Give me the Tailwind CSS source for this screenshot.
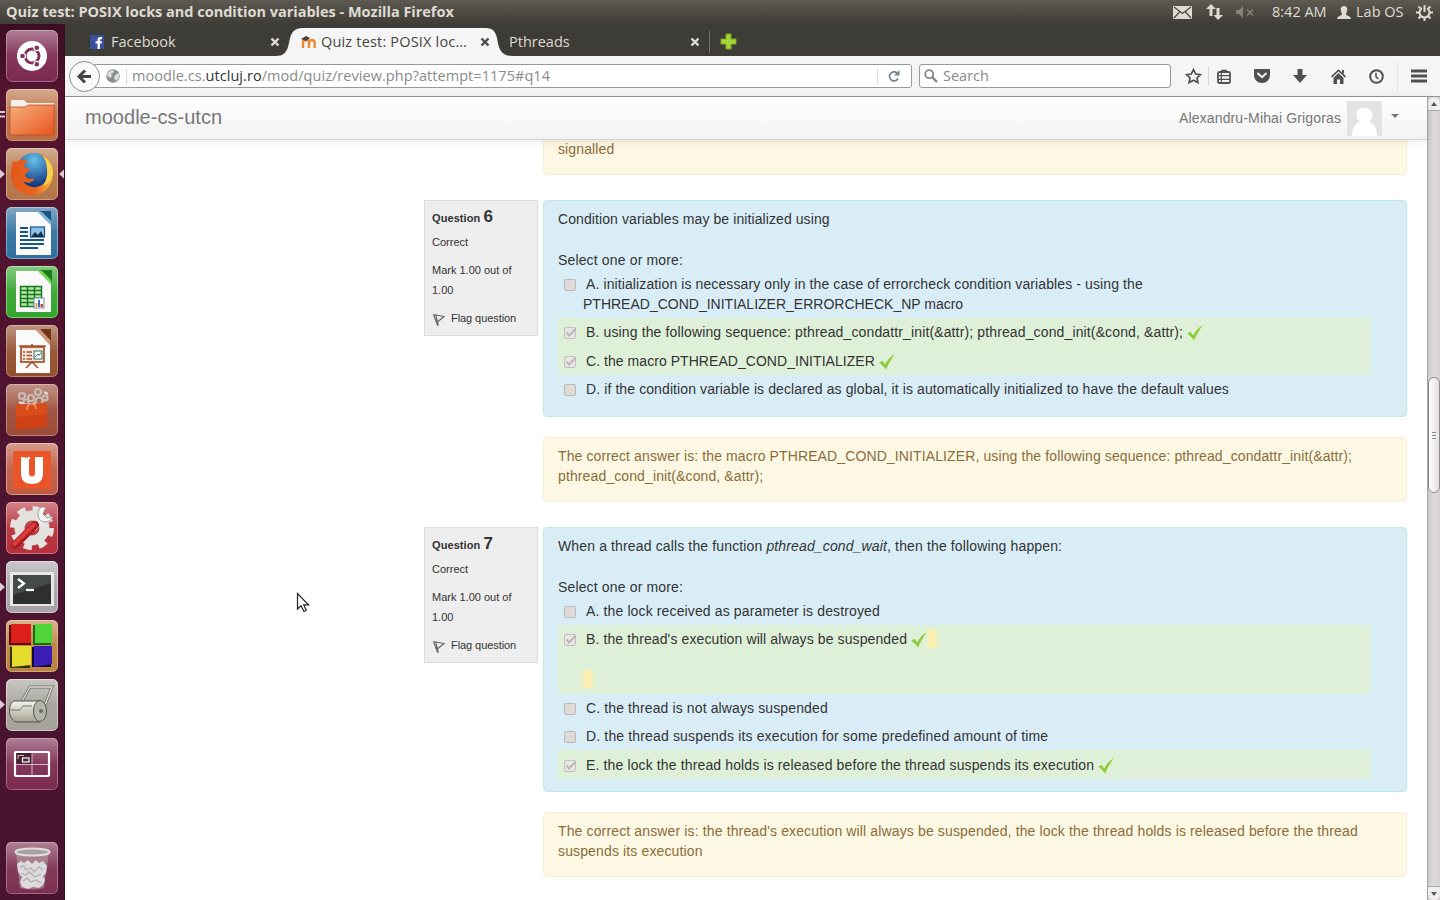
<!DOCTYPE html>
<html lang="en">
<head>
<meta charset="utf-8">
<title>Quiz test: POSIX locks and condition variables</title>
<script src="https://cdn.jsdelivr.net/npm/@tailwindcss/browser@4"></script>
</head>
<body class="w-[1440px] h-[900px] overflow-hidden bg-white font-['Open_Sans',sans-serif] flex flex-col">
<svg class="absolute w-0 h-0">
  <defs>
    <linearGradient id="gloss" x1="0" y1="0" x2="0" y2="1"><stop offset="0" stop-color="#fff" stop-opacity=".4"/><stop offset=".5" stop-color="#fff" stop-opacity=".06"/><stop offset="1" stop-color="#fff" stop-opacity="0"/></linearGradient>
    <linearGradient id="folder" x1="0" y1="0" x2="1" y2="1"><stop offset="0" stop-color="#f3b07c"/><stop offset="1" stop-color="#ea5420"/></linearGradient>
    <linearGradient id="fox" x1="0" y1="0" x2="1" y2="0"><stop offset="0" stop-color="#e2571c"/><stop offset=".6" stop-color="#e8681f"/><stop offset="1" stop-color="#f6c63c"/></linearGradient>
    <radialGradient id="globe" cx=".5" cy=".2" r=".7"><stop offset="0" stop-color="#67c0ea"/><stop offset="1" stop-color="#123a80"/></radialGradient>
    <linearGradient id="metal" x1="0" y1="0" x2="0" y2="1"><stop offset="0" stop-color="#f4f3ee"/><stop offset="1" stop-color="#a4a28e"/></linearGradient>
    <symbol id="tick" viewBox="0 0 16 16"><path d="M.3 8.800 3.600 6.800 6.200 10.400C8.500 6.200 11 2.900 15.700.3 12.500 5 9.400 9.500 7 15.600 5 12.800 3 10.700.3 8.800Z" fill="#8ccb3a"/></symbol>
    <symbol id="flag" viewBox="0 0 14 14"><path d="M1.500 1.500 12 3.500 6 8.500M1.500 1.500 5.800 12.800M3.800 2.200 6.300 12.500" fill="none" stroke="#666" stroke-width="1.200"/></symbol>
    <symbol id="box" viewBox="0 0 14 14"><rect x="1.500" y="1.500" width="11" height="11" rx="1.500" fill="#dedad8" stroke="#bcb8b7"/></symbol>
    <symbol id="boxon" viewBox="0 0 14 14"><rect x="1.500" y="1.500" width="11" height="11" rx="1.500" fill="#e9e6e6" stroke="#c3bfbe"/><path d="M3.500 6.500 6 9.500 13 2.500" fill="none" stroke="#bab5b6" stroke-width="1.900"/></symbol>
    <symbol id="x" viewBox="0 0 10 10"><path d="M1.500 1.500 8.500 8.500M8.500 1.500 1.500 8.500" stroke="currentColor" stroke-width="2.400"/></symbol>
  </defs>
</svg>

<!-- Top panel -->
<header class="h-6 shrink-0 flex items-center bg-linear-to-b from-[#5c5a51] to-[#403d38] text-[#dfdbd2] pl-[6px] pr-[7px]">
  <span class="text-[14.5px] font-bold whitespace-nowrap tracking-[-0.01px]">Quiz test: POSIX locks and condition variables - Mozilla Firefox</span>
  <div class="ml-auto flex items-center h-full text-[14.5px]">
    <svg class="w-[19px] h-[13px] mr-[14px]" viewBox="0 0 19 13"><rect width="19" height="13" rx="1" fill="#dfdbd2"/><path d="M1 1 9.500 7.500 18 1M1 12 6.500 6M18 12 12.500 6" fill="none" stroke="#4a483f" stroke-width="1.200"/></svg>
    <svg class="w-[17px] h-[16px] mr-[13px]" viewBox="0 0 17 16"><path d="M5 0 10 5H6.500V12H3.500V5H0ZM12 16 7.500 11H10.500V4H13.500V11H17Z" fill="#dfdbd2"/></svg>
    <svg class="w-[18px] h-[12px] mr-[18px]" viewBox="0 0 18 12"><path d="M0 4H3L7 0V12L3 8H0Z" fill="#85827a"/><path d="M11 3.500 17 9.500M17 3.500 11 9.500" stroke="#85827a" stroke-width="1.600"/></svg>
    <span class="whitespace-nowrap w-[54px] mr-[11px]">8:42 AM</span>
    <svg class="w-[14px] h-[13px] mr-[5px]" viewBox="0 0 14 13"><path d="M7 0C9.500 0 10.500 1.800 10.300 4 10.200 6 9 7 9 8.500 10 9.800 13.500 9.800 14 13H0C.5 9.800 4 9.800 5 8.500 5 7 3.800 6 3.700 4 3.500 1.800 4.500 0 7 0Z" fill="#dfdbd2"/></svg>
    <span class="whitespace-nowrap w-[47px] mr-[13px]">Lab OS</span>
    <svg class="w-[17px] h-[17px]" viewBox="0 0 17 17" fill="none" stroke="#dfdbd2"><path d="M6 4.200A5 5 0 1 0 11 4.200" stroke-width="2"/><path d="M8.500 1V8" stroke-width="2"/><path d="M2.500 2.500 4.300 4.300M14.500 2.500 12.700 4.300M0 8.500H3M14 8.500H17M2.500 14.500 4.500 12.500M14.500 14.500 12.500 12.500M8.500 14V17" stroke-width="2"/></svg>
  </div>
</header>

<div class="flex flex-1 min-h-0">
  <!-- Launcher -->
  <nav class="relative w-[65px] shrink-0 bg-linear-to-b from-[#3a0d22] via-[#54142f] via-8% to-[#481431] border-r border-[#3a0f26] flex flex-col gap-[7px] pl-[6px] pt-[6px] pb-[6px]">
    <svg class="w-[52px] h-[52px]" viewBox="0 0 52 52"><rect x=".5" y=".5" width="51" height="51" rx="6" fill="#7c2a52" stroke="#a56785"/><rect width="52" height="52" rx="6" fill="url(#gloss)"/><circle cx="26" cy="26" r="15" fill="#fff"/><circle cx="26" cy="26" r="7" fill="none" stroke="#84325a" stroke-width="3"/><g fill="#84325a" stroke="#fff" stroke-width="1.200"><circle cx="16.500" cy="26" r="2.900"/><circle cx="30.800" cy="17.800" r="2.900"/><circle cx="30.800" cy="34.200" r="2.900"/></g></svg>
    <svg class="w-[52px] h-[52px]" viewBox="0 0 52 52"><rect x=".5" y=".5" width="51" height="51" rx="5" fill="#bb6f43" stroke="#cf9572"/><rect width="52" height="52" rx="5" fill="url(#gloss)"/><path d="M5 20V11H18L21 14H48V20Z" fill="#f6efe9"/><path d="M4 18H19L22 16H48V44Q48 46 46 46H6Q4 46 4 44Z" fill="url(#folder)" stroke="#c14a1a" stroke-width=".8"/></svg>
    <svg class="w-[52px] h-[52px]" viewBox="0 0 52 52"><rect x=".5" y=".5" width="51" height="51" rx="5" fill="#b47648" stroke="#cf9d7a"/><rect width="52" height="52" rx="5" fill="url(#gloss)"/><circle cx="28" cy="23" r="18" fill="url(#globe)"/><path d="M7 13C9 14 10 14 12 13 15 11 19 11 22 14 18 15 17 18 20 20L24 21C23 24 20 24 19 27 20 31 25 32 29 30 27 35 21 36 17 33 22 41 34 41 39 34 42 29 41 22 42 18 40 12 37 9 34 6 43 9 48 18 47 27 46 39 37 47 26 47 13 47 4 37 5 25 5 20 6 17 7 13Z" fill="url(#fox)"/><path d="M40 15C42 24 42 31 37 38 43 36 47 29 46 22 45 15 41 10 37 8 39 11 40 13 40 15Z" fill="#f8d24e"/></svg>
    <svg class="w-[52px] h-[52px]" viewBox="0 0 52 52"><rect x=".5" y=".5" width="51" height="51" rx="5" fill="#30709f" stroke="#75a8cb"/><rect width="52" height="52" rx="5" fill="url(#gloss)"/><path d="M34 4H45V15Z" fill="#1b527f"/><path d="M10 5H32L45 18V48H10Z" fill="#fafafa"/><path d="M32 5 45 18V14L36 5Z" fill="#7cb4dc"/><path d="M14 21H22M14 25H22M14 29H22M14 33H38M14 37H38M14 41H32" stroke="#17548a" stroke-width="1.800"/><rect x="24.500" y="20" width="14" height="10" fill="#8ec2e8" stroke="#17548a" stroke-width="1.200"/><path d="M25 30 29 25 32 28 35 24 38 30Z" fill="#16314a"/></svg>
    <svg class="w-[52px] h-[52px]" viewBox="0 0 52 52"><rect x=".5" y=".5" width="51" height="51" rx="5" fill="#34a42e" stroke="#7cd076"/><rect width="52" height="52" rx="5" fill="url(#gloss)"/><path d="M34 4H46V16Z" fill="#1b7d17"/><path d="M10 5H32L45 18V46H10Z" fill="#fafafa"/><path d="M32 5 45 18V14L36 5Z" fill="#77dc5e"/><rect x="14.500" y="20.500" width="21" height="20" fill="#b8e4a8" stroke="#157a1c" stroke-width="1.500"/><path d="M14 24.500H36M14 28.500H36M14 32.500H36M14 36.500H36M21.500 20V41M28.500 20V41" stroke="#157a1c" stroke-width="1.500"/><rect x="28" y="32" width="10" height="10" fill="#fff" stroke="#6d8ba8"/><path d="M29.500 37H31.500V41H29.500Z" fill="#e3a13a"/><path d="M32 34H34V41H32Z" fill="#3b6fc0"/><path d="M34.500 38H37V41H34.500Z" fill="#d1452c"/></svg>
    <svg class="w-[52px] h-[52px]" viewBox="0 0 52 52"><rect x=".5" y=".5" width="51" height="51" rx="5" fill="#92502f" stroke="#b98468"/><rect width="52" height="52" rx="5" fill="url(#gloss)"/><path d="M34 4H45V16Z" fill="#6f3417"/><path d="M10 5H30L44 20V48H10Z" fill="#fafafa"/><path d="M30 5 44 20V15L34 5Z" fill="#d09a75"/><rect x="15" y="22" width="23" height="15" fill="#f7e9dd" stroke="#a4502a" stroke-width="1.700"/><path d="M13 21H40M26 19V22M26 37 20 43M26 37 32 43" stroke="#a4502a" stroke-width="1.600"/><path d="M17 27H19M20.500 27H26M17 30.500H19M20.500 30.500H26M17 34H19M20.500 34H26" stroke="#a4502a" stroke-width="1.700"/><rect x="28" y="26" width="8" height="8" fill="#fff" stroke="#2b7564"/><path d="M29 32 32 29 33 30.500 35 27.500" fill="none" stroke="#2b7564"/></svg>
    <svg class="w-[52px] h-[52px]" viewBox="0 0 52 52"><rect x=".5" y=".5" width="51" height="51" rx="5" fill="#9c4c38" stroke="#be8474"/><rect width="52" height="52" rx="5" fill="url(#gloss)"/><g fill="none" stroke="#c9bdb6" stroke-width="2.200"><circle cx="16" cy="12" r="3"/><circle cx="25" cy="14" r="3"/><circle cx="32" cy="8" r="3"/><circle cx="39" cy="14" r="2.500"/><circle cx="20" cy="18" r="2.500"/><circle cx="33" cy="17" r="3.500"/></g><path d="M13 18 17 20M38 8 42 10M27 19 31 21" stroke="#e8dfda" stroke-width="2"/><path d="M10 21 41 19V43L10 46Z" fill="#cf4216"/><path d="M10 21 41 19V30L10 33Z" fill="#d94c1a"/><path d="M21 26C21 18 30 18 30 25" fill="none" stroke="#f0a67c" stroke-width="1.500"/></svg>
    <svg class="w-[52px] h-[52px]" viewBox="0 0 52 52"><rect x=".5" y=".5" width="51" height="51" rx="5" fill="#bd5c42" stroke="#d39a88"/><rect width="52" height="52" rx="5" fill="url(#gloss)"/><rect x="7" y="8" width="38" height="38" rx="2" fill="#ea562a"/><path d="M15 14H22V17L24 16V14M15 14V30Q15 41 26 41T37 30V14H29V30Q29 33.500 26 33.500T23 30V15Z" fill="#fff"/></svg>
    <svg class="w-[52px] h-[52px]" viewBox="0 0 52 52"><rect x=".5" y=".5" width="51" height="51" rx="5" fill="#b6303a" stroke="#d27278"/><rect width="52" height="52" rx="5" fill="url(#gloss)"/><circle cx="26" cy="26" r="19" fill="none" stroke="#e4e2df" stroke-width="6" stroke-dasharray="8 6.920"/><circle cx="26" cy="26" r="12.500" fill="none" stroke="#e4e2df" stroke-width="10"/><path d="M27 27 38 15" stroke="#eee" stroke-width="6"/><path d="M35 5C31 9 31 15 35 19 39 21 45 20 47 14L41 16 37 12 40 5Z" fill="#f4f4f2" stroke="#888" stroke-width=".8"/><path d="M9 43 29 23" stroke="#a81e23" stroke-width="8" stroke-linecap="round"/><path d="M8.500 42 28 22.500" stroke="#dd3b3b" stroke-width="4" stroke-linecap="round"/></svg>
    <svg class="w-[52px] h-[52px]" viewBox="0 0 52 52"><rect x=".5" y=".5" width="51" height="51" rx="5" fill="#a7a3a9" stroke="#cfccd0"/><rect width="52" height="52" rx="5" fill="url(#gloss)"/><rect x="4" y="11" width="44" height="34" fill="#e8e8e6"/><rect x="7" y="14" width="38" height="29" fill="#2d2f30"/><path d="M7 14H45V22L7 34Z" fill="#46494a"/><path d="M12 18 18 22.500 12 27" fill="none" stroke="#fff" stroke-width="2.200"/><path d="M20 29H28" stroke="#fff" stroke-width="2.200"/></svg>
    <svg class="w-[52px] h-[52px]" viewBox="0 0 52 52"><rect x=".5" y=".5" width="51" height="51" rx="5" fill="#bb8340" stroke="#d5a975"/><rect width="52" height="52" rx="5" fill="url(#gloss)"/><path d="M3 5H25V25H3Z" fill="#5c0c0c"/><path d="M5 4H25V23H5Z" fill="#dc1f1b"/><path d="M27 5H45V25H27Z" fill="#1d6b17"/><path d="M29 4H46V23H29Z" fill="#4fd43a"/><path d="M4 27H24V48H4Z" fill="#33300a"/><path d="M6 26H25V45L6 47Z" fill="#e6dc2b"/><path d="M26 27H45V47H26Z" fill="#0e0842"/><path d="M28 26H46V44L28 47Z" fill="#3b1cb4"/></svg>
    <svg class="w-[52px] h-[52px]" viewBox="0 0 52 52"><rect x=".5" y=".5" width="51" height="51" rx="5" fill="#a5a29a" stroke="#cdcbc5"/><rect width="52" height="52" rx="5" fill="url(#gloss)"/><path d="M16 22 24 8H46L37 31" fill="none" stroke="#6e6e6a" stroke-width="3"/><path d="M16 22 24 8H46L37 31" fill="none" stroke="#dcdcd8" stroke-width="1.400"/><path d="M8 22H34V43H12C2 43 1 25 8 22Z" fill="url(#metal)" stroke="#55554c"/><ellipse cx="34" cy="32" rx="6.500" ry="10.500" fill="#b5b4a8" stroke="#55554c"/><circle cx="35" cy="32" r="2" fill="#66665e"/><path d="M4 31H14L17 27H26" fill="none" stroke="#77766a"/></svg>
    <svg class="w-[52px] h-[52px]" viewBox="0 0 52 52"><rect x=".5" y=".5" width="51" height="51" rx="5" fill="#7c2a50" stroke="#a56785"/><rect width="52" height="52" rx="5" fill="url(#gloss)"/><path d="M9 14H26V26H9Z" fill="#472032"/><rect x="9" y="14" width="34" height="24" rx="1" fill="none" stroke="#fff" stroke-width="2.200"/><path d="M26 14V38M9 26.500H43" stroke="#d9b6c6" stroke-width="1"/><path d="M12 21V17.500H18" fill="none" stroke="#cba" stroke-width="1"/><rect x="16.500" y="20" width="6.500" height="4" fill="#472032" stroke="#fff" stroke-width="1.200"/></svg>
    <svg class="w-[52px] h-[52px] mt-auto" viewBox="0 0 52 52"><rect x=".5" y=".5" width="51" height="51" rx="5" fill="#7c2f50" stroke="#a56785"/><rect width="52" height="52" rx="5" fill="url(#gloss)"/><path d="M10 10 14 46Q26 49 38 46L43 10Z" fill="#b9a4ae" fill-opacity=".55"/><ellipse cx="26.500" cy="10" rx="17" ry="3.500" fill="#a8a09f" stroke="#e0dedb" stroke-width="2"/><path d="M11 22 15 19 18 21 22 18 26 22 30 18 33 21 37 19 41 24 40 31 37 34 39 38 37 43 33 46 27 45 22 47 16 45 14 40 16 35 12 30Z" fill="#dcdada"/><path d="M14 25 18 24 20 28 25 26 28 30 33 25 37 28M15 31 20 33 23 30 29 35 35 32M17 39 21 36 25 40 30 38 35 41" fill="none" stroke="#b3adaf" stroke-width="1.300"/></svg>
    <!-- Running and focus markers -->
    <svg class="absolute left-0 top-0 w-[65px] h-[700px]" viewBox="0 0 65 700" fill="#d9cdd2"><path d="M0 87H5V89H0ZM0 91.500H5V93.500H0Z"/><path d="M0 145.500 5 150 0 154.500ZM64 145.500 59 150 64 154.500ZM0 558.500 5 563 0 567.500ZM0 676 5 680.500 0 685Z"/></svg>
  </nav>

  <main class="flex-1 min-w-0 flex flex-col">
    <!-- Tabs -->
    <div class="relative h-8 shrink-0 bg-[#3e3c37] flex items-center text-[14.5px] text-[#dfdbd2]">
      <svg class="absolute left-[211px] top-1 w-[236px] h-7" viewBox="0 0 236 28"><path d="M0 28C14 28 12 14 15 7Q18 0 26 0H210Q218 0 220 7C223 14 221 28 236 28Z" fill="#f6f5f5"/></svg>
      <div class="relative flex items-center w-full h-full pt-[3px] pl-[25px]">
        <svg class="w-[14px] h-[14px] mr-[7px]" viewBox="0 0 14 14"><rect width="14" height="14" fill="#3b4f9c"/><path d="M7.500 14V8.500H5.500V6.200H7.500V4.800Q7.500 2 10.300 2H12V4.300H10.800Q9.900 4.300 9.900 5.200V6.200H12L11.700 8.500H9.900V14Z" fill="#fff"/></svg>
        <span class="w-[159px] whitespace-nowrap">Facebook</span>
        <svg class="w-[10px] h-[10px] mr-[21px]"><use href="#x"/></svg>
        <svg class="w-[15px] h-[14px] mr-[5px]" viewBox="0 0 15 14"><path d="M2 13V7.500Q2 5 5 5T8 7.500V13M8 7.500Q8 5 10.800 5T13.600 7.500V13" fill="none" stroke="#ee8a2c" stroke-width="2.400"/><path d="M0 4 5 1 9 3 5 6Z" fill="#4a4038"/></svg>
        <span class="w-[159px] text-[#45443f] whitespace-nowrap tracking-[0.18px]">Quiz test: POSIX loc…</span>
        <svg class="w-[10px] h-[10px] mr-[19px] text-[#4c4b46]"><use href="#x"/></svg>
        <span class="w-[181px] whitespace-nowrap">Pthreads</span>
        <svg class="w-[10px] h-[10px] mr-[9px]"><use href="#x"/></svg>
        <div class="w-px h-[22px] bg-[#77746c] mr-[10px]"></div>
        <svg class="w-[17px] h-[17px]" viewBox="0 0 17 17"><path d="M6 1H11V6H16V11H11V16H6V11H1V6H6Z" fill="#a6d438" stroke="#7dab1c"/></svg>
      </div>
    </div>
    <!-- Navigation bar -->
    <div class="h-[41px] shrink-0 bg-[#f6f5f5] border-b border-[#949494] flex items-center text-[14.5px] text-[#8a8a8a] pl-1 pr-[13px]">
      <div class="relative z-10 size-[31px] rounded-full border border-[#8f8f8f] bg-[#fafafa] flex items-center justify-center shrink-0">
        <svg class="w-[15px] h-[15px]" viewBox="0 0 15 15"><path d="M8 1.500 2 7.500 8 13.500M2.500 7.500H14" fill="none" stroke="#444" stroke-width="3"/></svg>
      </div>
      <div class="-ml-[6px] h-6 w-[818px] bg-white border border-[#989898] rounded-r-[3px] flex items-center shrink-0">
        <svg class="ml-[11px] w-[14px] h-[14px]" viewBox="0 0 14 14"><circle cx="7" cy="7" r="6.800" fill="#8c8f90"/><path d="M1 5Q4 1 7 1L8 3 5 5 6 7 4 9 1.500 7ZM9 6 13 4V9L10 12 8 9Z" fill="#dcdedd"/></svg>
        <div class="w-px h-[15px] bg-[#d5d5d5] ml-[6px] mr-[5px]"></div>
        <span class="flex-1 whitespace-nowrap tracking-[0.05px]">moodle.cs.<span class="text-[#333]">utcluj.ro</span>/mod/quiz/review.php?attempt=1175#q14</span>
        <div class="w-px h-[17px] bg-[#ddd] mr-[10px]"></div>
        <svg class="w-[12px] h-[12px] mr-[11px]" viewBox="0 0 12 12"><path d="M10 8.500A4.500 4.500 0 1 1 9 3" fill="none" stroke="#77828a" stroke-width="1.700"/><path d="M11.500 0V5.500H6Z" fill="#77828a"/></svg>
      </div>
      <div class="ml-[7px] h-6 w-[252px] bg-white border border-[#989898] rounded-[3px] flex items-center shrink-0">
        <svg class="ml-1 w-[14px] h-[14px] mr-[5px]" viewBox="0 0 14 14"><circle cx="5.200" cy="5.200" r="4" fill="none" stroke="#858585" stroke-width="1.800"/><path d="M8.200 8.200 13 13" stroke="#858585" stroke-width="2.400"/></svg>
        <span class="whitespace-nowrap">Search</span>
      </div>
      <div class="flex items-center flex-1 pl-[14px]">
        <svg class="w-[17px] h-[16px] mr-[6px]" viewBox="0 0 17 16"><path d="M8.500 1.500 10.700 6 15.500 6.600 12 10 12.900 14.600 8.500 12.300 4.100 14.600 5 10 1.500 6.600 6.300 6Z" fill="none" stroke="#505050" stroke-width="1.700"/></svg>
        <div class="w-px h-[18px] bg-[#d2d2d2] mr-[8px]"></div>
        <svg class="w-[14px] h-[15px] mr-[23px]" viewBox="0 0 14 15"><rect x="1" y="3" width="12" height="11" rx="1.500" fill="none" stroke="#505050" stroke-width="1.800"/><path d="M4.500 3.500V1.200H9.500V3.500" fill="#505050" stroke="#505050" stroke-width="1"/><path d="M1 6.700H13M1 10.300H13M4.300 4V14" stroke="#505050" stroke-width="1.200"/></svg>
        <svg class="w-[16px] h-[14px] mr-[23px]" viewBox="0 0 16 14"><path d="M0 1Q0 0 1 0H15Q16 0 16 1V6C16 10.500 12.500 14 8 14S0 10.500 0 6Z" fill="#505050"/><path d="M4 4.500 8 8.300 12 4.500" fill="none" stroke="#f6f5f5" stroke-width="1.900" stroke-linecap="round"/></svg>
        <svg class="w-[14px] h-[14px] mr-[24px]" viewBox="0 0 14 14"><path d="M4.500 0H9.500V6H14L7 14 0 6H4.500Z" fill="#505050"/></svg>
        <svg class="w-[15px] h-[15px] mr-[23px]" viewBox="0 0 15 15"><path d="M.5 8 7.500 1.300 14.500 8" fill="none" stroke="#505050" stroke-width="1.600"/><path d="M7.500 4 12.500 8.800V15H9V10.500H6V15H2.500V8.800Z" fill="#505050"/><path d="M11 1H13V5L11 3.500Z" fill="#505050"/></svg>
        <svg class="w-[15px] h-[15px] mr-[13px]" viewBox="0 0 15 15"><circle cx="7.500" cy="7.500" r="6.300" fill="none" stroke="#505050" stroke-width="2"/><path d="M7 3.800V7.800L9.500 10" fill="none" stroke="#505050" stroke-width="1.500"/></svg>
        <div class="w-px h-[30px] bg-[#e6e5e5] mr-auto"></div>
        <svg class="w-[16px] h-[14px]" viewBox="0 0 16 14"><path d="M0 2H16M0 7H16M0 12H16" stroke="#505050" stroke-width="3"/></svg>
      </div>
    </div>

    <!-- Web page -->
    <div class="flex flex-1 min-h-0 font-['Liberation_Sans',sans-serif]">
      <div class="flex-1 min-w-0 flex flex-col">
        <div class="relative z-10 h-[43px] shrink-0 bg-linear-to-b from-white to-[#f2f2f2] border-b border-[#d4d4d4] shadow-[0_1px_10px_rgba(0,0,0,0.1)] flex items-center text-[#777] pl-5 pr-7">
          <span class="text-[20px] leading-5 whitespace-nowrap tracking-[0.03px] -mt-[2px]">moodle-cs-utcn</span>
          <span class="ml-auto w-[162px] text-[14px] whitespace-nowrap tracking-[0.14px]">Alexandru-Mihai Grigoras</span>
          <svg class="ml-[6px] w-[35px] h-[35px]" viewBox="0 0 35 35"><rect width="35" height="35" fill="#e3e3e3"/><path d="M17.500 6.500C22 6.500 25.500 10 25.500 14 25.500 17.500 23.500 19 22.500 21 27 23 30 27 30 35H5C5 27 8 23 12.500 21 11.500 19 9.500 17.500 9.500 14 9.500 10 13 6.500 17.500 6.500Z" fill="#fff"/></svg>
          <svg class="ml-[9px] mb-1 w-2 h-1" viewBox="0 0 8 4"><path d="M0 0H8L4 4Z" fill="#777"/></svg>
        </div>
        <div class="flex-1 min-h-0 overflow-hidden pl-[359px] pr-[20px] text-[14px] leading-5 text-[#333] tracking-[0.12px]">
          <div class="-mt-[30px] ml-[119px] h-[65px] border border-[#fbeed5] bg-[#fcf8e3] rounded text-[#8a6d3b] px-[14px] pt-[28px]">signalled</div>

          <section class="mt-[25px] flex items-start gap-[5px]">
            <div class="w-[114px] h-[136px] bg-[#eee] border border-[#dcdcdc] pl-[7px] pt-[5px] text-[11px] leading-5 whitespace-nowrap tracking-normal">
              <div class="h-[26px] leading-[22px] font-bold tracking-[0.09px]">Question <span class="text-[17px]">6</span></div>
              <div class="h-[28px]">Correct</div>
              <div class="h-[48px]">Mark 1.00 out of<br>1.00</div>
              <div class="flex"><svg class="w-[14px] h-[14px] mt-[5px] mr-[5px]"><use href="#flag"/></svg><span class="tracking-[-0.07px]">Flag question</span></div>
            </div>
            <div class="w-[864px] h-[217px] bg-[#d9edf7] border border-[#bce8f1] rounded-[4px] pl-[14px] pr-[35px] pt-2 whitespace-nowrap">
              <div class="h-[41px] tracking-[0.09px]">Condition variables may be initialized using</div>
              <div class="h-5 tracking-[0.15px]">Select one or more:</div>
              <div class="h-12 pt-1 flex"><svg class="w-[14px] h-[14px] ml-[5px] mt-[4px] mr-[6px]"><use href="#box"/></svg><div><span class="ml-[3px] tracking-[0.105px]">A. initialization is necessary only in the case of errorcheck condition variables - using the</span><br><span class="tracking-normal">PTHREAD_COND_INITIALIZER_ERRORCHECK_NP macro</span></div></div>
              <div class="h-7 pt-1 flex bg-[#dff0d8]"><svg class="w-[14px] h-[14px] ml-[5px] mt-[4px] mr-[9px]"><use href="#boxon"/></svg><span class="tracking-[0.133px]">B. using the following sequence: pthread_condattr_init(&amp;attr); pthread_cond_init(&amp;cond, &amp;attr);</span><svg class="w-4 h-4 ml-[4px] mt-[3px]"><use href="#tick"/></svg></div>
              <div class="h-[29px] pt-[5px] flex bg-[#dff0d8]"><svg class="w-[14px] h-[14px] ml-[5px] mt-[4px] mr-[9px]"><use href="#boxon"/></svg><span class="tracking-[0.05px]">C. the macro PTHREAD_COND_INITIALIZER</span><svg class="w-4 h-4 ml-[4px] mt-[3px]"><use href="#tick"/></svg></div>
              <div class="h-7 pt-1 flex"><svg class="w-[14px] h-[14px] ml-[5px] mt-[4px] mr-[9px]"><use href="#box"/></svg><span class="tracking-[0.1px]">D. if the condition variable is declared as global, it is automatically initialized to have the default values</span></div>
            </div>
          </section>
          <div class="mt-5 ml-[119px] h-[65px] border border-[#fbeed5] bg-[#fcf8e3] rounded text-[#8a6d3b] px-[14px] pt-[8px] whitespace-nowrap tracking-[0.116px]">The correct answer is: the macro PTHREAD_COND_INITIALIZER, using the following sequence: pthread_condattr_init(&amp;attr);<br>pthread_cond_init(&amp;cond, &amp;attr);</div>

          <section class="mt-[25px] flex items-start gap-[5px]">
            <div class="w-[114px] h-[136px] bg-[#eee] border border-[#dcdcdc] pl-[7px] pt-[5px] text-[11px] leading-5 whitespace-nowrap tracking-normal">
              <div class="h-[26px] leading-[22px] font-bold tracking-[0.09px]">Question <span class="text-[17px]">7</span></div>
              <div class="h-[28px]">Correct</div>
              <div class="h-[48px]">Mark 1.00 out of<br>1.00</div>
              <div class="flex"><svg class="w-[14px] h-[14px] mt-[5px] mr-[5px]"><use href="#flag"/></svg><span class="tracking-[-0.07px]">Flag question</span></div>
            </div>
            <div class="w-[864px] h-[265px] bg-[#d9edf7] border border-[#bce8f1] rounded-[4px] pl-[14px] pr-[35px] pt-2 whitespace-nowrap">
              <div class="h-[41px] tracking-[0.137px]">When a thread calls the function <i>pthread_cond_wait</i>, then the following happen:</div>
              <div class="h-5 tracking-[0.15px]">Select one or more:</div>
              <div class="h-7 pt-1 flex"><svg class="w-[14px] h-[14px] ml-[5px] mt-[4px] mr-[9px]"><use href="#box"/></svg><span class="tracking-[0.13px]">A. the lock received as parameter is destroyed</span></div>
              <div class="h-[69px] pt-1 bg-[#dff0d8]"><div class="flex h-10"><svg class="w-[14px] h-[14px] ml-[5px] mt-[4px] mr-[9px]"><use href="#boxon"/></svg><span class="tracking-[0.11px]">B. the thread's execution will always be suspended</span><svg class="w-4 h-4 ml-[4px] mt-[3px]"><use href="#tick"/></svg><div class="w-[10px] h-[18px] bg-[#fcefb4] mt-px"></div></div><div class="w-[10px] h-[18px] bg-[#fcefb4] ml-[25px] mt-px"></div></div>
              <div class="h-7 pt-1 flex"><svg class="w-[14px] h-[14px] ml-[5px] mt-[4px] mr-[9px]"><use href="#box"/></svg><span>C. the thread is not always suspended</span></div>
              <div class="h-7 pt-1 flex"><svg class="w-[14px] h-[14px] ml-[5px] mt-[4px] mr-[9px]"><use href="#box"/></svg><span class="tracking-[0.153px]">D. the thread suspends its execution for some predefined amount of time</span></div>
              <div class="h-[29px] pt-[5px] flex bg-[#dff0d8]"><svg class="w-[14px] h-[14px] ml-[5px] mt-[4px] mr-[9px]"><use href="#boxon"/></svg><span class="tracking-[0.133px]">E. the lock the thread holds is released before the thread suspends its execution</span><svg class="w-4 h-4 ml-[4px] mt-[3px]"><use href="#tick"/></svg></div>
            </div>
          </section>
          <div class="mt-5 ml-[119px] h-[65px] border border-[#fbeed5] bg-[#fcf8e3] rounded text-[#8a6d3b] px-[14px] pt-[8px] whitespace-nowrap tracking-[0.137px]">The correct answer is: the thread's execution will always be suspended, the lock the thread holds is released before the thread<br>suspends its execution</div>
        </div>
      </div>
      <!-- Scrollbar -->
      <div class="relative w-[13px] shrink-0 bg-linear-to-r from-[#cfcaca] via-[#dedada] to-[#d6d1d1] border-l border-[#a9a4a4] flex flex-col justify-between">
        <div class="h-[14px] rounded-t-full bg-[#f1efee] border-b border-[#aaa] flex items-center justify-center"><svg class="w-[6px] h-[4px]" viewBox="0 0 6 4"><path d="M0 4 3 0 6 4Z" fill="#555"/></svg></div>
        <div class="absolute top-[280px] left-0 w-3 h-[116px] rounded-full border border-[#8f8a8a] bg-linear-to-r from-white to-[#e4e1e0] flex flex-col gap-[2px] items-center justify-center"><i class="w-1 h-px bg-[#888]"></i><i class="w-1 h-px bg-[#888]"></i><i class="w-1 h-px bg-[#888]"></i></div>
        <div class="h-[14px] rounded-b-full bg-[#f1efee] border-t border-[#aaa] flex items-center justify-center"><svg class="w-[6px] h-[4px]" viewBox="0 0 6 4"><path d="M0 0 3 4 6 0Z" fill="#555"/></svg></div>
      </div>
    </div>
  </main>
</div>
<!-- Mouse pointer -->
<svg class="absolute left-[296px] top-[592px] w-[14px] h-[21px]" viewBox="0 0 14 21"><path d="M1.500 1.500V17L5 13.700 8 19.500 10.300 18.300 7.700 12.800H12.500Z" fill="#fff" stroke="#222" stroke-width="1.200"/></svg>
</body>
</html>
